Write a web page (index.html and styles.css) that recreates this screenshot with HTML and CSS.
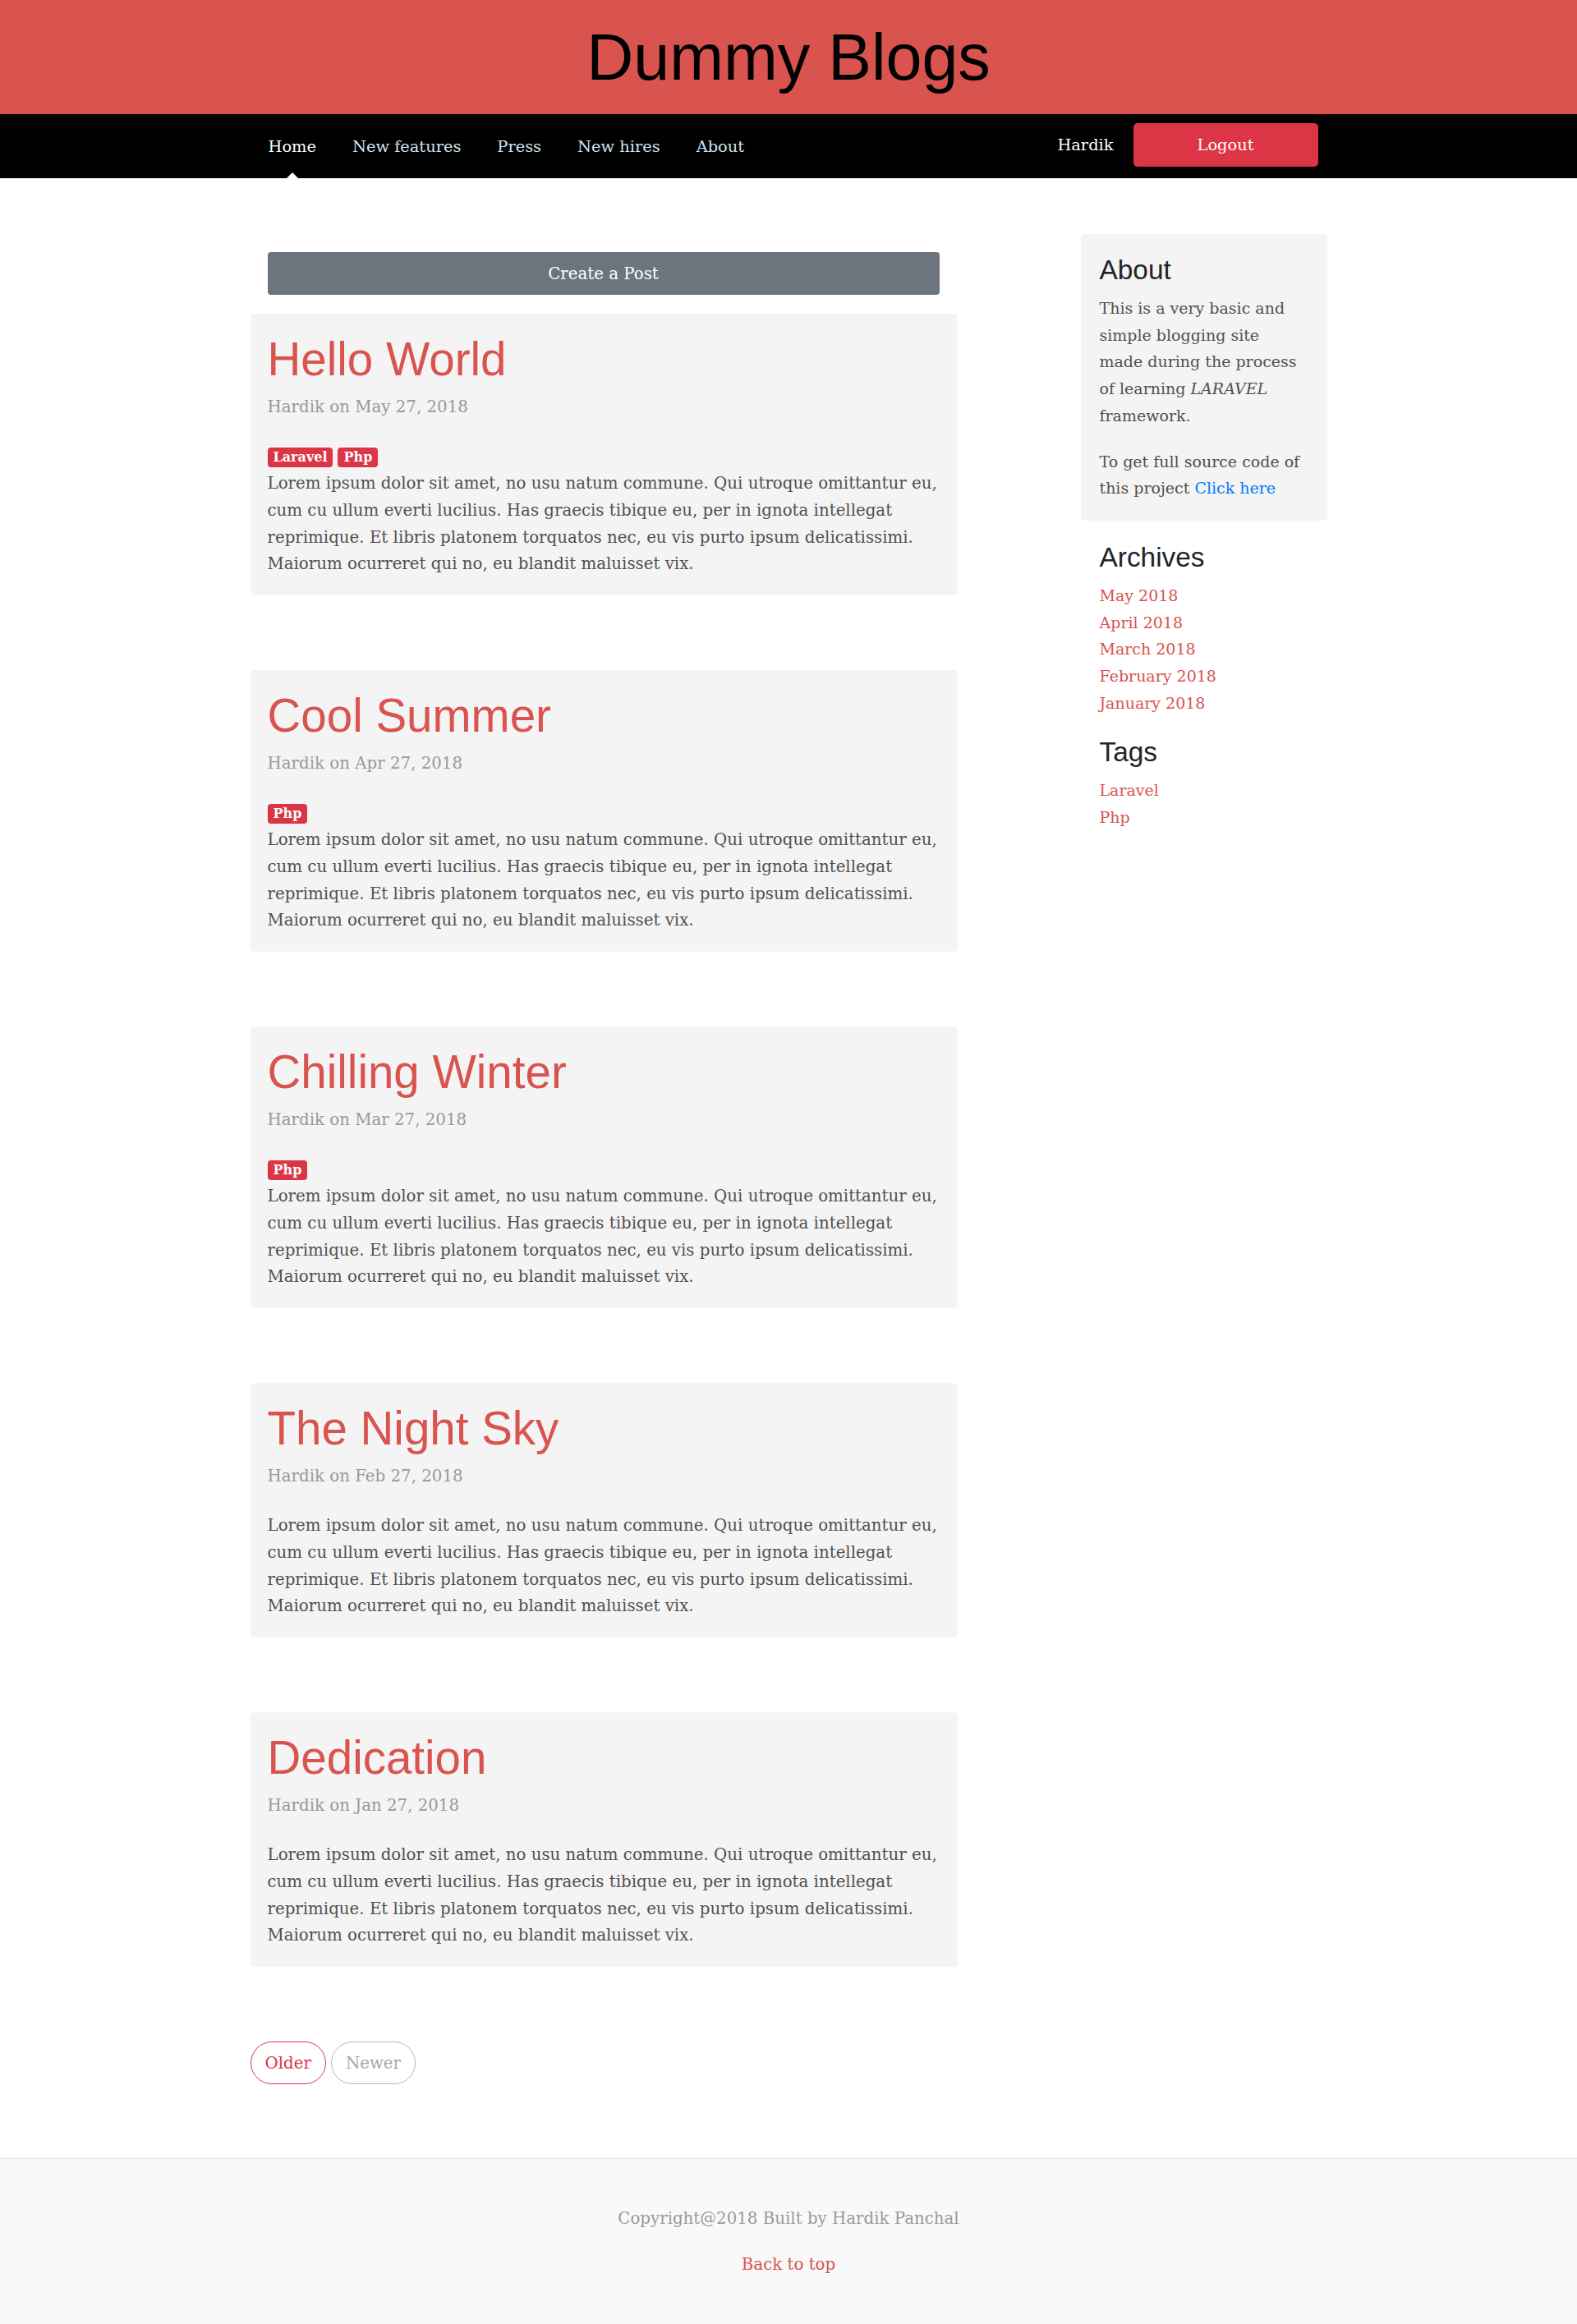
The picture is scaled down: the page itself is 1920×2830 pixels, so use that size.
FILE: index.html
```html
<!DOCTYPE html>
<html lang="en">
<head>
<meta charset="utf-8">
<title>Dummy Blogs</title>
<link rel="stylesheet" href="styles.css">
</head>
<body>
<header class="site-header">
  <h1 class="site-title">Dummy Blogs</h1>
</header>
<nav class="topnav">
  <div class="topnav-inner">
    <ul class="nav-links">
      <li><a class="nav-link active" href="#">Home</a></li>
      <li><a class="nav-link" href="#">New features</a></li>
      <li><a class="nav-link" href="#">Press</a></li>
      <li><a class="nav-link" href="#">New hires</a></li>
      <li><a class="nav-link" href="#">About</a></li>
    </ul>
    <div class="nav-user">
      <span class="user-name">Hardik</span>
      <a class="btn-logout" href="#">Logout</a>
    </div>
  </div>
</nav>
<div class="page">
  <main class="main-col">
    <div class="create-wrap"><a class="btn-create" href="#">Create a Post</a></div>

    <article class="post">
      <h2 class="post-title">Hello World</h2>
      <p class="post-meta">Hardik on May 27, 2018</p>
      <div class="tags"><span class="badge">Laravel</span><span class="badge">Php</span></div>
      <p class="post-body">Lorem ipsum dolor sit amet, no usu natum commune. Qui utroque omittantur eu, cum cu ullum everti lucilius. Has graecis tibique eu, per in ignota intellegat reprimique. Et libris platonem torquatos nec, eu vis purto ipsum delicatissimi. Maiorum ocurreret qui no, eu blandit maluisset vix.</p>
    </article>

    <article class="post">
      <h2 class="post-title">Cool Summer</h2>
      <p class="post-meta">Hardik on Apr 27, 2018</p>
      <div class="tags"><span class="badge">Php</span></div>
      <p class="post-body">Lorem ipsum dolor sit amet, no usu natum commune. Qui utroque omittantur eu, cum cu ullum everti lucilius. Has graecis tibique eu, per in ignota intellegat reprimique. Et libris platonem torquatos nec, eu vis purto ipsum delicatissimi. Maiorum ocurreret qui no, eu blandit maluisset vix.</p>
    </article>

    <article class="post">
      <h2 class="post-title">Chilling Winter</h2>
      <p class="post-meta">Hardik on Mar 27, 2018</p>
      <div class="tags"><span class="badge">Php</span></div>
      <p class="post-body">Lorem ipsum dolor sit amet, no usu natum commune. Qui utroque omittantur eu, cum cu ullum everti lucilius. Has graecis tibique eu, per in ignota intellegat reprimique. Et libris platonem torquatos nec, eu vis purto ipsum delicatissimi. Maiorum ocurreret qui no, eu blandit maluisset vix.</p>
    </article>

    <article class="post">
      <h2 class="post-title">The Night Sky</h2>
      <p class="post-meta">Hardik on Feb 27, 2018</p>
      <p class="post-body">Lorem ipsum dolor sit amet, no usu natum commune. Qui utroque omittantur eu, cum cu ullum everti lucilius. Has graecis tibique eu, per in ignota intellegat reprimique. Et libris platonem torquatos nec, eu vis purto ipsum delicatissimi. Maiorum ocurreret qui no, eu blandit maluisset vix.</p>
    </article>

    <article class="post">
      <h2 class="post-title">Dedication</h2>
      <p class="post-meta">Hardik on Jan 27, 2018</p>
      <p class="post-body">Lorem ipsum dolor sit amet, no usu natum commune. Qui utroque omittantur eu, cum cu ullum everti lucilius. Has graecis tibique eu, per in ignota intellegat reprimique. Et libris platonem torquatos nec, eu vis purto ipsum delicatissimi. Maiorum ocurreret qui no, eu blandit maluisset vix.</p>
    </article>

    <nav class="pager">
      <a class="pill pill-older" href="#">Older</a>
      <span class="pill pill-newer">Newer</span>
    </nav>
  </main>

  <aside class="sidebar">
    <div class="about-box">
      <h4 class="side-title">About</h4>
      <p class="about-text">This is a very basic and simple blogging site made during the process of learning <em>LARAVEL</em> framework.</p>
      <p class="about-text last">To get full source code of this project <a class="blue-link" href="#">Click here</a></p>
    </div>
    <div class="side-section">
      <h4 class="side-title">Archives</h4>
      <ol class="side-list">
        <li><a href="#">May 2018</a></li>
        <li><a href="#">April 2018</a></li>
        <li><a href="#">March 2018</a></li>
        <li><a href="#">February 2018</a></li>
        <li><a href="#">January 2018</a></li>
      </ol>
    </div>
    <div class="side-section tags-section">
      <h4 class="side-title">Tags</h4>
      <ol class="side-list">
        <li><a href="#">Laravel</a></li>
        <li><a href="#">Php</a></li>
      </ol>
    </div>
  </aside>
</div>
<footer class="site-footer">
  <p class="copy">Copyright@2018 Built by Hardik Panchal</p>
  <p class="back"><a href="#">Back to top</a></p>
</footer>
</body>
</html>
```
FILE: styles.css
```css
* { box-sizing: border-box; }

html, body { margin: 0; padding: 0; }

body {
  font-family: "DejaVu Serif", Georgia, serif;
  font-size: 19.8px;
  line-height: 32.7px;
  color: #505050;
  background: #fff;
  min-height: 100vh;
  display: flex;
  flex-direction: column;
}

a { text-decoration: none; }

/* Header */
.site-header {
  background: #d9534f;
  height: 139px;
  padding-top: 30px;
  text-align: center;
}
.site-title {
  margin: 0;
  font-family: "Liberation Sans", Arial, sans-serif;
  font-weight: 400;
  font-size: 79px;
  line-height: 79px;
  color: #000;
}

/* Top nav */
.topnav {
  background: #000;
  height: 78px;
  font-size: 19.4px;
}
.topnav-inner {
  width: 1311px;
  margin: 0 auto;
  height: 100%;
  display: flex;
  align-items: center;
  justify-content: space-between;
}
.nav-links {
  list-style: none;
  margin: 0;
  padding: 0;
  display: flex;
  height: 100%;
  align-items: center;
}
.nav-links li { height: 100%; display: flex; align-items: center; }
.nav-link {
  position: relative;
  display: flex;
  align-items: center;
  height: 100%;
  padding: 2px 22px 0;
  color: #d3e2f0;
}
.nav-link:first-child { padding-left: 22px; }
.nav-link.active { color: #fff; }
.nav-link.active::after {
  content: "";
  position: absolute;
  left: 50%;
  bottom: 0;
  margin-left: -7px;
  border-left: 7px solid transparent;
  border-right: 7px solid transparent;
  border-bottom: 7px solid #fff;
}
.nav-user {
  display: flex;
  align-items: center;
  gap: 24px;
  margin-right: 11px;
}
.user-name { color: #fff; margin-top: -2px; }
.btn-logout {
  display: flex;
  align-items: center;
  justify-content: center;
  width: 225px;
  height: 53px;
  margin-top: -3px;
  padding-top: 2px;
  background: #dc3545;
  color: #fff;
  border-radius: 5px;
}

/* Page layout */
.page {
  width: 1311px;
  margin: 0 auto;
  display: grid;
  grid-template-columns: 861px 300px;
  column-gap: 150px;
  align-items: start;
}

.main-col { padding-top: 90px; }

.create-wrap { padding: 0 22px 0 21px; margin-bottom: 23px; }
.btn-create {
  display: flex;
  align-items: center;
  justify-content: center;
  height: 52px;
  padding-top: 2px;
  background: #6c757d;
  color: #fff;
  border-radius: 4px;
}

/* Posts */
.post {
  background: #f4f4f4;
  border-radius: 5px;
  padding: 23px 15px 21px 21px;
  margin-bottom: 91px;
}
.post-title {
  margin: 0 0 9px;
  font-family: "Liberation Sans", Arial, sans-serif;
  font-weight: 400;
  font-size: 56.5px;
  line-height: 66px;
  color: #d9534f;
}
.post-meta {
  margin: 0 0 27.5px;
  color: #999;
}
.tags {
  display: flex;
  gap: 6px;
  height: 33px;
  padding-top: 5px;
}
.badge {
  display: inline-flex;
  align-items: center;
  height: 24px;
  padding: 0 7px;
  background: #dc3545;
  color: #fff;
  font-weight: 700;
  font-size: 16px;
  line-height: 1;
  border-radius: 4px;
}
.post-body { margin: 0; }

/* Pager */
.pager {
  display: flex;
  gap: 6px;
  margin-bottom: 90px;
}
.pill {
  display: inline-flex;
  align-items: center;
  justify-content: center;
  height: 52px;
  padding: 2px 17px 0;
  border-radius: 26px;
  border: 1px solid;
}
.pill-older { color: #dc3545; border-color: #dc3545; }
.pill-newer { color: #a3a8ad; border-color: #b3b7bb; }

/* Sidebar */
.sidebar { padding-top: 68px; font-size: 19px; }
.about-box {
  background: #f4f4f4;
  border-radius: 5px;
  padding: 24px 28px 23px 23px;
}
.side-title {
  margin: 0 0 11px;
  font-family: "Liberation Sans", Arial, sans-serif;
  font-weight: 400;
  font-size: 33.4px;
  line-height: 39px;
  color: #212529;
}
.about-text { margin: 0 0 23px; }
.about-text.last { margin-bottom: 0; }
.blue-link { color: #007bff; }

.side-section { padding: 25px 23px 0; }
.tags-section { padding-top: 24px; }
.side-list {
  list-style: none;
  margin: 0;
  padding: 0;
}
.side-list a { color: #d9534f; }

/* Footer */
.site-footer {
  flex-grow: 1;
  background: #f9f9f9;
  border-top: 1px solid #e5e5e5;
  padding: 57px 0 40px;
  text-align: center;
}
.site-footer p { margin: 0; }
.copy { color: #999; margin-bottom: 23px !important; }
.back a { color: #d9534f; }
```
